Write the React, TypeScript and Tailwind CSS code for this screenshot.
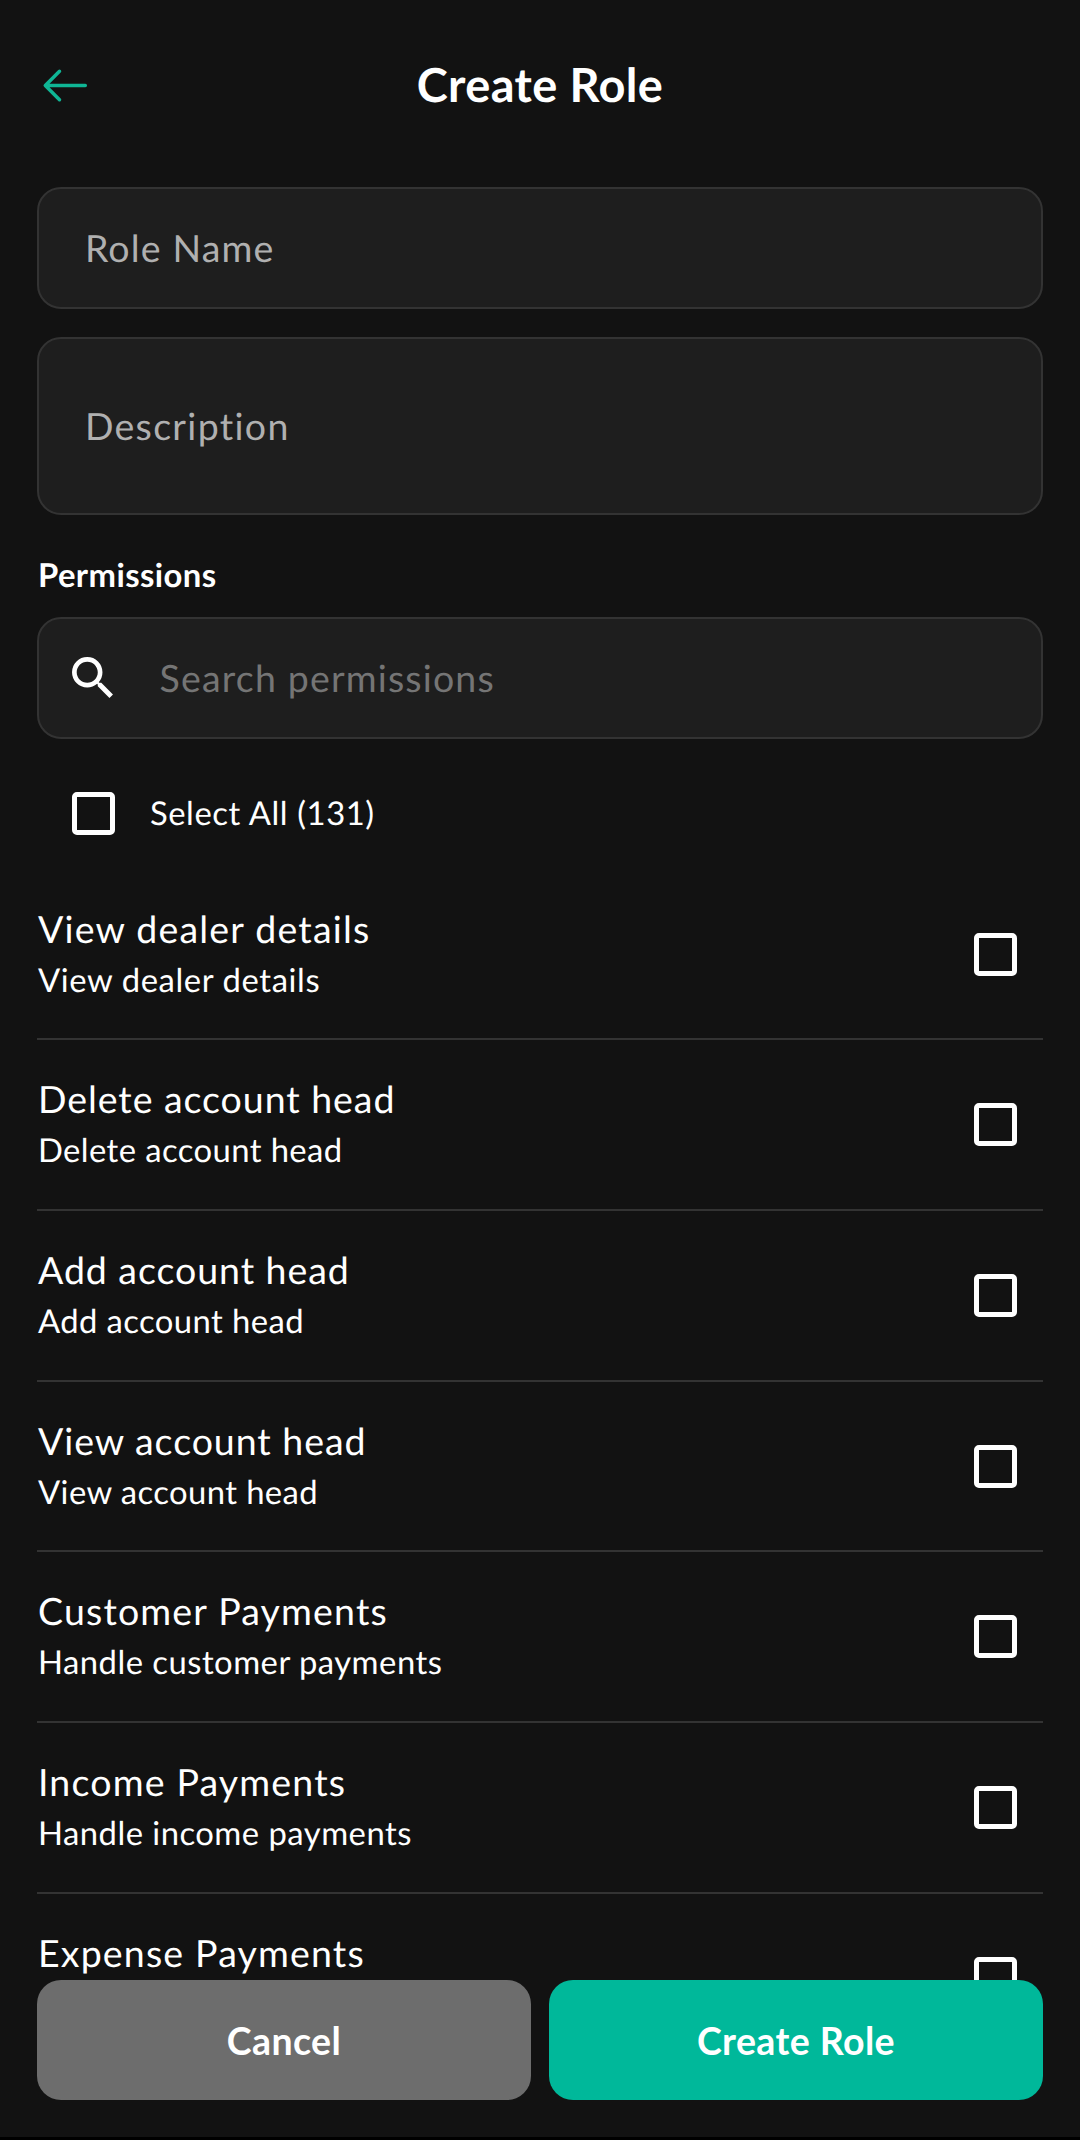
import { MdSearch } from "react-icons/md";

const base = { titleClass: "tracking-[1.2px]", textClass: "tracking-[0.6px]" };
const tight = { titleClass: "tracking-[0.95px]", textClass: "tracking-[0.41px]" };
const payments = { titleClass: "tracking-[1.17px]", textClass: "tracking-[0.48px]" };

const permissions = [
  { title: "View dealer details", description: "View dealer details", ...base },
  { title: "Delete account head", description: "Delete account head", ...tight },
  { title: "Add account head", description: "Add account head", ...tight },
  { title: "View account head", description: "View account head", ...tight },
  { title: "Customer Payments", description: "Handle customer payments", ...payments },
  { title: "Income Payments", description: "Handle income payments", ...payments },
  { title: "Expense Payments", description: "", ...payments },
];

type Permission = (typeof permissions)[number];

function Checkbox() {
  return (
    <span
      role="checkbox"
      aria-checked="false"
      className="block size-[43px] shrink-0 rounded-[5px] border-5 border-white"
    />
  );
}

function Header() {
  return (
    <header className="grid h-[187px] shrink-0 grid-cols-[1fr_auto_1fr] items-start px-[37.4px] pt-[56px]">
      <button className="mt-[1.5px] w-14" aria-label="Back">
        <svg width="56" height="56" viewBox="0 0 56 56" fill="none">
          <path
            d="M22.5 13.3 8.3 27.5l14.2 14.2M48.3 27.5H8.7"
            stroke="#0fb695"
            strokeWidth="3.5"
            strokeLinecap="round"
            strokeLinejoin="round"
          />
        </svg>
      </button>
      <h1 className="text-[46.9px] leading-[56px] font-bold tracking-[0.4px]">Create Role</h1>
    </header>
  );
}

function PermissionRow({ title, description, titleClass, textClass }: Permission) {
  return (
    <li className="flex h-[170.67px] shrink-0 items-start justify-between border-b-2 border-[#333333] pt-[31px] pr-[25.5px]">
      <div className="pl-[0.6px]">
        <p className={`text-[37.5px] leading-[55px] ${titleClass}`}>{title}</p>
        <p className={`text-[32.8px] leading-[47px] ${textClass}`}>{description}</p>
      </div>
      <div className="pt-8">
        <Checkbox />
      </div>
    </li>
  );
}

export default function App() {
  return (
    <div className="flex h-[2140px] w-[1080px] flex-col overflow-hidden border-b-3 border-black bg-[#121212] font-[Lato,sans-serif] text-white [text-rendering:geometricPrecision]">
      <Header />

      <div className="flex shrink-0 flex-col px-[37.4px]">
        <div className="flex h-[122px] items-center rounded-[24px] border-2 border-[#333333] bg-[#1e1e1e] px-[45.5px] text-[37.5px] tracking-[1.17px] text-[#b0b0b0]">
          Role Name
        </div>
        <div className="mt-7 flex h-[178px] items-center rounded-[24px] border-2 border-[#333333] bg-[#1e1e1e] px-[45.5px] text-[37.5px] tracking-[1.32px] text-[#b0b0b0]">
          Description
        </div>

        <h2 className="mt-[36px] pl-[0.6px] text-[32.8px] leading-[47px] font-bold tracking-[0.42px]">
          Permissions
        </h2>

        <div className="mt-[19px] flex h-[122px] items-center rounded-[24px] border-2 border-[#333333] bg-[#1e1e1e] pl-[26px] text-[37.5px] tracking-[1.17px]">
          <MdSearch className="size-[56.2px] text-white" />
          <span className="pl-[38px] text-[#757575]">Search permissions</span>
        </div>

        <label className="mt-[49px] flex h-[51px] items-center pl-[34.5px] text-[32.8px] tracking-[0.59px]">
          <Checkbox />
          <span className="pb-[2px] pl-[35px]">Select All (131)</span>
        </label>
      </div>

      <ul className="mt-[30.6px] flex min-h-0 flex-1 flex-col overflow-hidden px-[37.4px]">
        {permissions.map((permission) => (
          <PermissionRow key={permission.title} {...permission} />
        ))}
      </ul>

      <footer className="grid shrink-0 grid-cols-2 gap-[18.75px] px-[37.4px] pb-[37px] text-[37.5px] font-bold tracking-[0.4px]">
        <button className="h-[120px] rounded-[24px] bg-[#6d6d6d] pt-0.5">Cancel</button>
        <button className="h-[120px] rounded-[24px] bg-[#00b89a] pt-0.5">Create Role</button>
      </footer>
    </div>
  );
}
